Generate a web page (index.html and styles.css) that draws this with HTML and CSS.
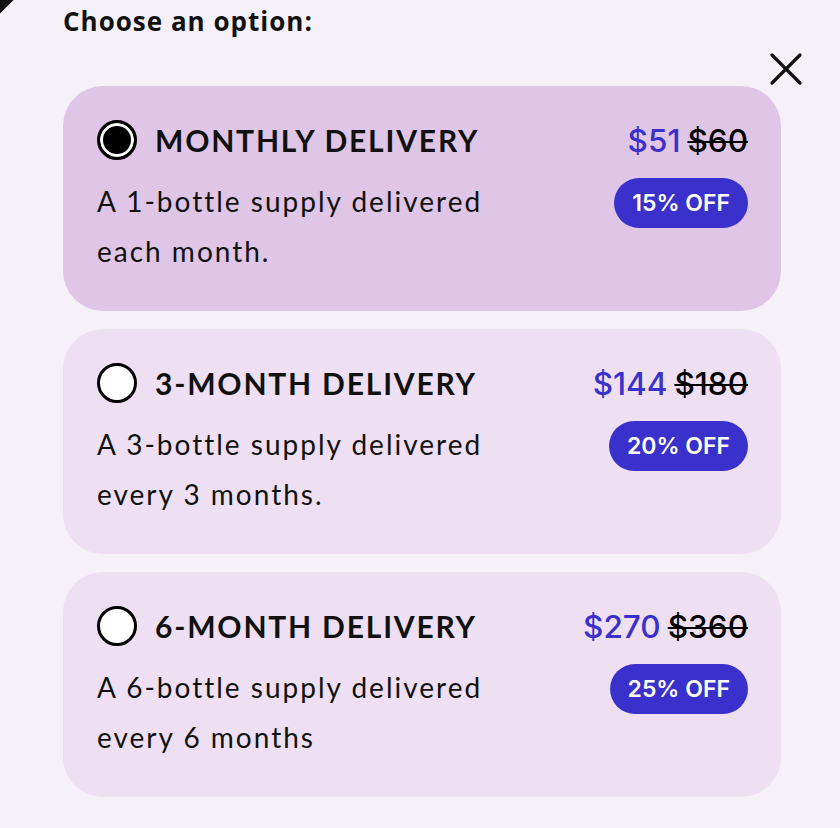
FILE: index.html
```html
<!DOCTYPE html>
<html lang="en">
<head>
    <meta charset="UTF-8">
    <meta name="viewport" content="width=device-width, initial-scale=1.0">
    <title>Choose an option</title>
    <link rel="stylesheet" href="styles.css">
</head>
<body>
    <div class="corner"></div>
    <div class="modal">
        <h3 class="modal-title">Choose an option:</h3>
        <button class="close" title="Close">
            <svg width="34" height="34" viewBox="0 0 34 34"><path d="M3 3 L31 31 M31 3 L3 31" stroke="#111" stroke-width="3.2" stroke-linecap="round"/></svg>
        </button>

        <div class="options">
            <div class="option selected">
                <div class="option-main">
                    <div class="option-head">
                        <span class="radio"></span>
                        <span class="option-name">MONTHLY DELIVERY</span>
                    </div>
                    <p class="option-desc">A 1-bottle supply delivered<br>each month.</p>
                </div>
                <div class="option-side">
                    <div class="price"><span class="now">$51</span> <s class="was">$60</s></div>
                    <span class="badge">15% OFF</span>
                </div>
            </div>

            <div class="option">
                <div class="option-main">
                    <div class="option-head">
                        <span class="radio"></span>
                        <span class="option-name">3-MONTH DELIVERY</span>
                    </div>
                    <p class="option-desc">A 3-bottle supply delivered<br>every 3 months.</p>
                </div>
                <div class="option-side">
                    <div class="price"><span class="now">$144</span> <s class="was">$180</s></div>
                    <span class="badge">20% OFF</span>
                </div>
            </div>

            <div class="option">
                <div class="option-main">
                    <div class="option-head">
                        <span class="radio"></span>
                        <span class="option-name">6-MONTH DELIVERY</span>
                    </div>
                    <p class="option-desc">A 6-bottle supply delivered<br>every 6 months</p>
                </div>
                <div class="option-side">
                    <div class="price"><span class="now">$270</span> <s class="was">$360</s></div>
                    <span class="badge">25% OFF</span>
                </div>
            </div>
        </div>
    </div>
</body>
</html>
```

FILE: styles.css
```css
:root {
    --page-bg: #f6f1f9;
    --card-bg: #eee0f2;
    --card-selected: #dfc6e6;
    --accent: #3a30cc;
    --text: #111111;
}

body {
    margin: 0;
    padding: 0;
    background-color: var(--page-bg);
    color: var(--text);
    font-family: 'Lato', 'Liberation Sans', sans-serif;
}

/* кусочек оверлея в углу */
.corner {
    position: absolute;
    top: -12px;
    left: -12px;
    width: 22px;
    height: 22px;
    background: #111;
    transform: rotate(45deg);
}

.modal {
    position: relative;
    padding: 0 59px 30px 63px;
}

.modal-title {
    margin: 0;
    padding-top: 5px;
    font-family: 'Open Sans', 'Liberation Sans', sans-serif;
    font-size: 26px;
    font-weight: 700;
    letter-spacing: 1px;
    line-height: 32px;
}

.close {
    position: absolute;
    top: 52px;
    right: 37px;
    background: none;
    border: none;
    padding: 0;
    width: 34px;
    height: 34px;
    cursor: pointer;
}

.options {
    display: flex;
    flex-direction: column;
    gap: 18px;
    margin-top: 49px;
}

.option {
    display: flex;
    justify-content: space-between;
    background-color: var(--card-bg);
    border-radius: 40px;
    padding: 34px 33px 0 34px;
    height: 225px;
    box-sizing: border-box;
}

.option.selected {
    background-color: var(--card-selected);
}

.option-head {
    display: flex;
    align-items: center;
    gap: 18px;
    height: 40px;
}

.radio {
    width: 40px;
    height: 40px;
    box-sizing: border-box;
    border: 3px solid #000;
    border-radius: 50%;
    background: #fff;
}

.option.selected .radio {
    background: #000;
    box-shadow: inset 0 0 0 3px #fff;
}

.option-name {
    font-size: 30px;
    font-weight: 700;
    letter-spacing: 1.8px;
}

.option-desc {
    margin: 16px 0 0;
    font-size: 28px;
    line-height: 50px;
    font-weight: 400;
    letter-spacing: 2px;
}

.option-side {
    display: flex;
    flex-direction: column;
    align-items: flex-end;
}

.price {
    height: 40px;
    display: flex;
    align-items: center;
    gap: 7px;
    font-family: 'Inter', 'Liberation Sans', sans-serif;
    font-size: 31.5px;
    font-weight: 500;
}

.price .now {
    color: var(--accent);
}

.price .was {
    color: #000;
    text-decoration-thickness: 2px;
}

.badge {
    margin-top: 18px;
    background-color: var(--accent);
    color: #fff;
    font-family: 'Inter', 'Liberation Sans', sans-serif;
    font-size: 23px;
    font-weight: 600;
    height: 50px;
    line-height: 50px;
    padding: 0 18px;
    border-radius: 25px;
}
```
